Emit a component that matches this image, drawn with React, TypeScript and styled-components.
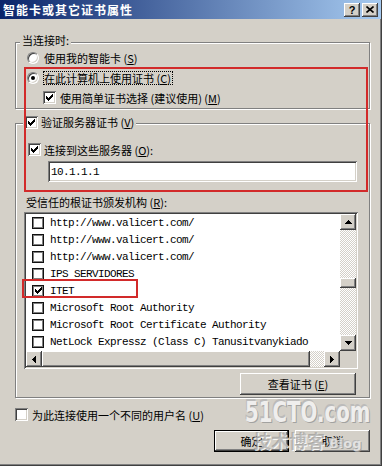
import styled, { createGlobalStyle, css } from 'styled-components'

const FACE = '#d4d0c8'
const SHADOW = '#808080'
const DARK = '#404040'
const LIGHT = '#ffffff'
const MARK = '#d22a2a'
const UI_FONT = `"Noto Sans CJK SC", "Noto Sans", sans-serif`
const MONO = `"Liberation Mono", "DejaVu Sans Mono", monospace`

const GlobalStyle = createGlobalStyle`
  * { box-sizing: border-box; }
  html, body { margin: 0; padding: 0; background: ${FACE}; }
  body {
    font-family: ${UI_FONT};
    font-size: 11px;
    line-height: 14px;
    color: #000;
  }
`

const raised = css`
  background: ${FACE};
  box-shadow: inset -1px -1px ${DARK}, inset 1px 1px ${LIGHT},
    inset -2px -2px ${SHADOW}, inset 2px 2px ${FACE};
`

const sunken = css`
  box-shadow: inset 1px 1px ${SHADOW}, inset -1px -1px ${LIGHT},
    inset 2px 2px ${DARK}, inset -2px -2px ${FACE};
`

const checker = css`
  background-color: #fff;
  background-image: repeating-conic-gradient(${FACE} 0 25%, #fff 0 50%);
  background-size: 2px 2px;
`

const Window = styled.div`
  position: relative;
  width: 382px;
  height: 466px;
  display: flex;
  flex-direction: column;
  background: ${FACE};
  border-right: 1px solid ${DARK};
  border-bottom: 1px solid ${DARK};
  box-shadow: inset -1px -1px ${SHADOW};
  overflow: hidden;
`

const TitleBar = styled.div`
  flex: none;
  height: 19px;
  display: flex;
  align-items: center;
  justify-content: space-between;
  padding: 0 3px;
  background: linear-gradient(to right, #0a246a, #a6caf0);
`

const TitleText = styled.span`
  color: #fff;
  font-weight: 700;
  font-size: 12px;
  letter-spacing: 1px;
`

const CaptionButtons = styled.div`
  display: flex;
  gap: 2px;
`

const CaptionButton = styled.div`
  width: 16px;
  height: 14px;
  ${raised};
  display: flex;
  align-items: center;
  justify-content: center;
  font: 700 11px 'Liberation Sans', sans-serif;
`

const Body = styled.div`
  flex: 1;
  display: flex;
  flex-direction: column;
  padding: 0 11px 0 15px;
`

const GroupBox = styled.section<{ $mt: number; $pb: number }>`
  margin-top: ${p => p.$mt}px;
  display: flex;
  flex-direction: column;
  align-items: flex-start;
  border: 1px solid ${SHADOW};
  box-shadow: inset 1px 1px ${LIGHT}, 1px 1px ${LIGHT};
  padding-bottom: ${p => p.$pb}px;
`

const Legend = styled.div<{ $mt: number; $ml: number }>`
  display: flex;
  align-items: center;
  gap: 3px;
  height: 14px;
  margin: ${p => p.$mt}px 0 0 ${p => p.$ml}px;
  padding: 0 2px;
  background: ${FACE};
  white-space: nowrap;
`

const Row = styled.div<{ $mt?: number; $ml?: number; $gap?: number }>`
  display: flex;
  align-items: center;
  height: 17px;
  margin: ${p => p.$mt ?? 0}px 0 0 ${p => p.$ml ?? 0}px;
  gap: ${p => p.$gap ?? 4}px;
  white-space: nowrap;
`

const FocusLabel = styled.span`
  border: 1px dotted #000;
  padding: 0 1px 0 0;
  line-height: 12px;
`

const Key = styled.u`
  text-underline-offset: 1px;
`

const Radio = styled.span<{ $on?: boolean }>`
  flex: none;
  display: inline-flex;
  align-items: center;
  justify-content: center;
  width: 12px;
  height: 12px;
  border-radius: 50%;
  border: 1px solid;
  border-color: ${SHADOW} ${LIGHT} ${LIGHT} ${SHADOW};
  background: #fff;
  box-shadow: inset 1px 1px ${DARK}, inset -1px -1px ${FACE};

  &::after {
    content: '';
    display: ${p => (p.$on ? 'block' : 'none')};
    width: 4px;
    height: 4px;
    border-radius: 50%;
    background: #000;
  }
`

const Box = styled.span<{ $flat?: boolean }>`
  flex: none;
  display: inline-flex;
  align-items: center;
  justify-content: center;
  width: 13px;
  height: 13px;
  background: #fff;
  ${p =>
    p.$flat
      ? css`
          width: 12px;
          height: 12px;
          border: 1px solid #111;
          box-shadow: inset 1px 1px ${SHADOW}, inset -1px -1px ${SHADOW};
        `
      : sunken}
`

const TextBox = styled.div`
  margin: 3px 0 0 32px;
  width: 309px;
  height: 21px;
  padding: 0 3px;
  display: flex;
  align-items: center;
  background: #fff;
  ${sunken};
  font-family: ${MONO};
  font-size: 11px;
  letter-spacing: -0.6px;
`

const Caption = styled.div<{ $mt: number; $ml: number }>`
  height: 14px;
  margin: ${p => p.$mt}px 0 0 ${p => p.$ml}px;
  white-space: nowrap;
`

const ListBox = styled.div`
  margin: 3px 0 0 8px;
  width: 334px;
  height: 157px;
  padding: 2px;
  background: #fff;
  ${sunken};
  display: grid;
  grid-template-columns: 1fr 16px;
  grid-template-rows: 1fr 16px;
`

const Items = styled.div`
  display: flex;
  flex-direction: column;
  overflow: hidden;
`

const Item = styled.div`
  flex: none;
  height: 17px;
  display: flex;
  align-items: center;
  gap: 6px;
  padding-left: 6px;
  font-family: ${MONO};
  font-size: 11px;
  letter-spacing: -0.6px;
  white-space: nowrap;
`

const VScroll = styled.div`
  display: flex;
  flex-direction: column;
  ${checker};
`

const HScroll = styled.div`
  display: flex;
  ${checker};
`

const ScrollButton = styled.div`
  flex: none;
  width: 16px;
  height: 16px;
  ${raised};
  display: flex;
  align-items: center;
  justify-content: center;
`

const VThumb = styled.div`
  flex: none;
  height: 10px;
  margin-top: 48px;
  ${raised};
`

const HThumb = styled.div`
  flex: none;
  width: 268px;
  ${raised};
`

const Spacer = styled.div`
  flex: 1;
`

const Corner = styled.div`
  background: ${FACE};
`

const PushButton = styled.button<{ $w: number; $mt?: number; $mr?: number; $default?: boolean }>`
  width: ${p => p.$w}px;
  height: 22px;
  margin: ${p => p.$mt ?? 0}px ${p => p.$mr ?? 0}px 0 0;
  padding: 0;
  border: none;
  ${raised};
  ${p => p.$default && css`border: 1px solid #000;`}
  font-family: ${UI_FONT};
  font-size: 11px;
  color: #000;
  align-self: flex-end;
`

const ButtonRow = styled.div`
  display: flex;
  justify-content: flex-end;
  gap: 6px;
  margin-top: 7px;
`

const Annotation = styled.div<{ $x: number; $y: number; $w: number; $h: number }>`
  position: absolute;
  left: ${p => p.$x}px;
  top: ${p => p.$y}px;
  width: ${p => p.$w}px;
  height: ${p => p.$h}px;
  border: 2px solid ${MARK};
  pointer-events: none;
`

const Watermark = styled.div`
  position: absolute;
  left: 245px;
  top: 397px;
  pointer-events: none;
  opacity: 0.85;
  color: #f4f4f4;
  text-shadow: 1px 1px 0 #9a9a9a, -1px -1px 0 #b8b8b8;
`

const WatermarkLogo = styled.div`
  font: 700 22px 'DejaVu Sans Condensed', 'DejaVu Sans', sans-serif;
  transform: scaleY(1.3);
  transform-origin: top left;
  line-height: 24px;
`

const WatermarkLine = styled.div`
  display: flex;
  align-items: baseline;
  gap: 4px;
  margin: 8px 0 0 8px;
`

const WatermarkCn = styled.span`
  font: 700 18px ${UI_FONT};
  line-height: 22px;
  color: rgba(120, 120, 120, 0.5);
  text-shadow: 1px 1px 0 #fff;
`

const WatermarkBlog = styled.span`
  font: 700 13px 'DejaVu Sans', sans-serif;
  color: #e6e6e6;
`

const CHECK_ROWS: [number, number][][] = [
  [[6, 1]],
  [[5, 2]],
  [[0, 1], [4, 3]],
  [[0, 2], [3, 3]],
  [[0, 5]],
  [[1, 3]],
  [[2, 1]],
]

const CheckMark = () => (
  <svg width="7" height="7" viewBox="0 0 7 7" shapeRendering="crispEdges">
    {CHECK_ROWS.flatMap((row, y) =>
      row.map(([x, w]) => <rect key={`${y}-${x}`} x={x} y={y} width={w} height={1} fill="#000" />),
    )}
  </svg>
)

const CheckBox = ({ checked, flat }: { checked?: boolean; flat?: boolean }) => (
  <Box $flat={flat}>{checked && <CheckMark />}</Box>
)

type Dir = 'up' | 'down' | 'left' | 'right'

const Arrow = ({ dir }: { dir: Dir }) => {
  const vertical = dir === 'up' || dir === 'down'
  const rects = [0, 1, 2, 3].map(i => {
    if (dir === 'up') return { x: 3 - i, y: i, w: 2 * i + 1, h: 1 }
    if (dir === 'down') return { x: i, y: i, w: 7 - 2 * i, h: 1 }
    if (dir === 'left') return { x: i, y: 3 - i, w: 1, h: 2 * i + 1 }
    return { x: i, y: i, w: 1, h: 7 - 2 * i }
  })
  return (
    <svg
      width={vertical ? 7 : 4}
      height={vertical ? 4 : 7}
      viewBox={vertical ? '0 0 7 4' : '0 0 4 7'}
      shapeRendering="crispEdges"
    >
      {rects.map((r, i) => (
        <rect key={i} x={r.x} y={r.y} width={r.w} height={r.h} fill="#000" />
      ))}
    </svg>
  )
}

const CloseGlyph = () => (
  <svg width="8" height="7" viewBox="0 0 8 7">
    <path d="M0.5 0.5 L7.5 6.5 M7.5 0.5 L0.5 6.5" stroke="#000" strokeWidth="1.6" />
  </svg>
)

const authorities = [
  { name: 'http://www.valicert.com/' },
  { name: 'http://www.valicert.com/' },
  { name: 'http://www.valicert.com/' },
  { name: 'IPS SERVIDORES' },
  { name: 'ITET', checked: true },
  { name: 'Microsoft Root Authority' },
  { name: 'Microsoft Root Certificate Authority' },
  { name: 'NetLock Expressz (Class C) Tanusitvanykiado' },
]

export default function App() {
  return (
    <>
      <GlobalStyle />
      <Window>
        <TitleBar>
          <TitleText>智能卡或其它证书属性</TitleText>
          <CaptionButtons>
            <CaptionButton>?</CaptionButton>
            <CaptionButton>
              <CloseGlyph />
            </CaptionButton>
          </CaptionButtons>
        </TitleBar>

        <Body>
          <GroupBox $mt={23} $pb={2}>
            <Legend $mt={-10} $ml={4}>当连接时:</Legend>
            <Row $mt={2} $ml={11} $gap={5}>
              <Radio />
              <span>
                使用我的智能卡 (<Key>S</Key>)
              </span>
            </Row>
            <Row $mt={3} $ml={11} $gap={4}>
              <Radio $on />
              <FocusLabel>
                在此计算机上使用证书 (<Key>C</Key>)
              </FocusLabel>
            </Row>
            <Row $mt={3} $ml={27}>
              <CheckBox checked />
              <span>
                使用简单证书选择 (建议使用) (<Key>M</Key>)
              </span>
            </Row>
          </GroupBox>

          <GroupBox $mt={14} $pb={2}>
            <Legend $mt={-9} $ml={7}>
              <CheckBox checked />
              <span>
                验证服务器证书 (<Key>V</Key>)
              </span>
            </Legend>
            <Row $mt={12} $ml={12} $gap={3}>
              <CheckBox checked />
              <span>
                连接到这些服务器 (<Key>O</Key>):
              </span>
            </Row>
            <TextBox>10.1.1.1</TextBox>
            <Caption $mt={13} $ml={10}>
              受信任的根证书颁发机构 (<Key>R</Key>):
            </Caption>
            <ListBox>
              <Items>
                {authorities.map((a, i) => (
                  <Item key={i}>
                    <CheckBox flat checked={a.checked} />
                    <span>{a.name}</span>
                  </Item>
                ))}
              </Items>
              <VScroll>
                <ScrollButton>
                  <Arrow dir="up" />
                </ScrollButton>
                <VThumb />
                <Spacer />
                <ScrollButton>
                  <Arrow dir="down" />
                </ScrollButton>
              </VScroll>
              <HScroll>
                <ScrollButton>
                  <Arrow dir="left" />
                </ScrollButton>
                <HThumb />
                <Spacer />
                <ScrollButton>
                  <Arrow dir="right" />
                </ScrollButton>
              </HScroll>
              <Corner />
            </ListBox>
            <PushButton $w={116} $mt={4} $mr={13}>
              查看证书 (<Key>E</Key>)
            </PushButton>
          </GroupBox>

          <Row $mt={8} $gap={4}>
            <CheckBox />
            <span>
              为此连接使用一个不同的用户名 (<Key>U</Key>)
            </span>
          </Row>

          <ButtonRow>
            <PushButton $w={75} $default>
              确定
            </PushButton>
            <PushButton $w={75}>取消</PushButton>
          </ButtonRow>
        </Body>

        <Annotation $x={24} $y={67} $w={344} $h={125} />
        <Annotation $x={22} $y={279} $w={116} $h={19} />

        <Watermark>
          <WatermarkLogo>51CTO.com</WatermarkLogo>
          <WatermarkLine>
            <WatermarkCn>技术博客</WatermarkCn>
            <WatermarkBlog>Blog</WatermarkBlog>
          </WatermarkLine>
        </Watermark>
      </Window>
    </>
  )
}
